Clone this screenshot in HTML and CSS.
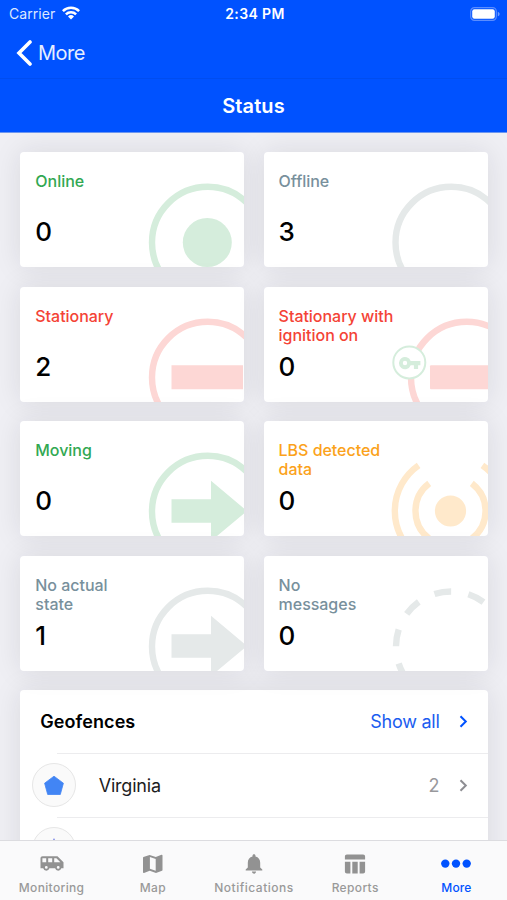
FILE: index.html
```html
<!DOCTYPE html>
<html lang="en">
<head>
<meta charset="utf-8">
<title>Status</title>
<link rel="stylesheet" href="styles.css">
</head>
<body>
<div class="app">
  <header class="header">
    <div class="statusbar">
      <div class="carrier"><span>Carrier</span>
        <svg width="18" height="14" viewBox="0 0 18 14" fill="none" stroke="#fff" stroke-width="2.5"><path d="M.9 5.2a11.4 11.4 0 0 1 16.2 0M3.9 8.3a7.2 7.2 0 0 1 10.2 0"/><path d="M9 13.4 6 10.5a4.3 4.3 0 0 1 6 0z" fill="#fff" stroke="none"/></svg>
      </div>
      <div class="time">2:34 PM</div>
      <svg class="battery" width="31" height="14" viewBox="0 0 31 14"><rect x=".7" y=".7" width="25.6" height="12.6" rx="3.7" fill="none" stroke="#5a8dff" stroke-width="1.2"/><rect x="2.2" y="2.2" width="22.6" height="9.6" rx="2.2" fill="#fff"/><path d="M27.8 4.700c2.400.8 2.400 3.800 0 4.600z" fill="#6f9cff"/></svg>
    </div>
    <div class="back"><svg width="16" height="26" viewBox="0 0 16 26"><path d="M14 2 3 13l11 11" fill="none" stroke="#fff" stroke-width="3.600" stroke-linecap="round" stroke-linejoin="miter"/></svg><span>More</span></div>
    <h1 class="title"><span>Status</span></h1>
  </header>

  <main class="content">
    <section class="grid">
      <article class="card green"><svg class="art" viewBox="0 0 224 115"><circle class="ring" cx="187.7" cy="90.5" r="55.7"/><circle class="solid" cx="187.3" cy="90.5" r="24.5"/></svg><h2>Online</h2><p>0</p></article>
      <article class="card gray"><svg class="art" viewBox="0 0 224 115"><circle class="ring" cx="187.2" cy="90.5" r="55.7"/></svg><h2>Offline</h2><p>3</p></article>
      <article class="card red"><svg class="art" viewBox="0 0 224 115"><circle class="ring" cx="187.7" cy="90.5" r="55.7"/><path class="solid" d="M151.5 78.2H223v24h-71.5z"/></svg><h2>Stationary</h2><p>2</p></article>
      <article class="card red"><svg class="art" viewBox="0 0 224 115"><circle class="ring" cx="202.7" cy="90.5" r="55.7"/><rect class="solid" x="166" y="78.2" width="62" height="24" rx="1"/><circle class="key-ring" cx="145.3" cy="75.4" r="16"/><path class="key" fill-rule="evenodd" d="M146.7 73.9a6.1 6.1 0 1 0 0 4.3h3.2v3.8h4.2v-3.8h2.3v-4.3zM141 73.8a2.2 2.2 0 1 1 0 4.4 2.2 2.2 0 0 1 0-4.4z"/></svg><h2>Stationary with ignition on</h2><p>0</p></article>
      <article class="card green"><svg class="art" viewBox="0 0 224 115"><circle class="ring" cx="187.7" cy="90.5" r="55.7"/><path class="solid" d="M151.5 78.3H191V59.7L227 90l-36 30v-18.2h-39.5z"/></svg><h2>Moving</h2><p>0</p></article>
      <article class="card orange"><svg class="art" viewBox="0 0 224 115"><circle class="solid" cx="186.5" cy="90" r="15.6"/><path class="ring" d="M154.6 44.300a55.800 55.800 0 0 0 0 91.400M218.400 44.300a55.800 55.800 0 0 1 0 91.400M165.200 62.400a34.600 34.600 0 0 0 0 55.200M207.800 62.400a34.600 34.600 0 0 1 0 55.200"/></svg><h2>LBS detected data</h2><p>0</p></article>
      <article class="card gray"><svg class="art" viewBox="0 0 224 115"><circle class="ring" cx="187.7" cy="90.5" r="55.7"/><path class="solid" d="M151.5 78.3H191V59.7L227 90l-36 30v-18.2h-39.5z"/></svg><h2>No actual<br>state</h2><p>1</p></article>
      <article class="card gray"><svg class="art" viewBox="0 0 224 115"><circle class="ring" cx="187" cy="90.5" r="55" stroke-dasharray="17 17.56"/></svg><h2>No<br>messages</h2><p>0</p></article>
    </section>

    <section class="list">
      <div class="list-head"><h3><span>Geofences</span></h3><a><span>Show all</span></a><svg class="chev" width="9" height="13" viewBox="0 0 9 13"><path d="m1.500 1.200 5.300 5.300-5.300 5.300"/></svg></div>
      <div class="row"><i class="badge"><svg width="20" height="19" viewBox="0 0 20 19"><path d="m10 .2 9.400 7-3.100 11.300H3.700L.6 7.200z" fill="#4285f4" stroke="#4285f4" stroke-width=".8" stroke-linejoin="round"/></svg></i><span class="name">Virginia</span><span class="count">2</span><svg class="chev" width="9" height="13" viewBox="0 0 9 13"><path d="m1.500 1.200 5.300 5.300-5.300 5.300"/></svg></div>
      <div class="row"><i class="badge"><svg width="22" height="22" viewBox="0 0 22 22"><path d="m11 0 2.800 7.600H22l-6.500 5 2.300 8L11 16l-6.800 4.600 2.300-8L0 7.600h8.200z" fill="#4d5ce0"/></svg></i></div>
    </section>
  </main>

  <nav class="tabs">
    <a class="tab"><svg width="24" height="20" viewBox="0 0 24 20"><path fill-rule="evenodd" d="M2.500 2.300h15l6 6v6h-2.200a3.200 3.200 0 0 1-6.200 0H9.400a3.200 3.200 0 0 1-6.200 0H.5v-10c0-1.100.9-2 2-2zM2.400 4.300v4h3.800v-4zm5.800 0v4h4v-4zm6 0v4h6.200l-4-4zM6.300 12a1.400 1.400 0 1 0 0 2.800 1.400 1.400 0 0 0 0-2.800zm11.900 0a1.400 1.400 0 1 0 0 2.800 1.400 1.400 0 0 0 0-2.800z"/></svg><span>Monitoring</span></a>
    <a class="tab"><svg width="24" height="20" viewBox="0 0 24 20"><path fill-rule="evenodd" d="M3.200 2.800 8.600.9l6.200 2 5.700-2.100c.5-.2 1 .1 1 .6V16c0 .4-.2.6-.5.7l-6 2.200-6.300-2.100-5.700 2.100c-.5.2-1-.1-1-.6V3.700c0-.4.4-.8 1.200-.9zM8.900 3v11.700l5.800 2V5z"/></svg><span>Map</span></a>
    <a class="tab notifications"><svg width="24" height="20" viewBox="0 0 24 20"><path d="M12 .2c.9 0 1.500.6 1.500 1.500v.7c3 .7 4.700 3.200 4.700 6.300v4.800l2.100 2v1.100H3.700v-1.100l2.100-2V8.700c0-3.100 1.700-5.600 4.700-6.300v-.7C10.500.8 11.100.2 12 .2zM9.900 17.600h4.200a2.100 2.100 0 0 1-4.200 0z"/></svg><span>Notifications</span></a>
    <a class="tab"><svg width="24" height="20" viewBox="0 0 24 20"><path d="M3.900.6h16.200c1.200 0 2 .8 2 2v3H1.900v-3c0-1.200.8-2 2-2zM1.900 7.700h5.500v11.800H3.900c-1.200 0-2-.8-2-2zM9.300 7.700h5.400v11.800H9.300zM16.600 7.700h5.500v9.800c0 1.200-.8 2-2 2h-3.500z"/></svg><span>Reports</span></a>
    <a class="tab active"><svg width="32" height="20" viewBox="0 0 32 20"><circle cx="5.300" cy="9.600" r="4.200"/><circle cx="16" cy="9.600" r="4.200"/><circle cx="26.700" cy="9.600" r="4.200"/></svg><span>More</span></a>
  </nav>
</div>
</body>
</html>
```

FILE: styles.css
```css
* { box-sizing: border-box; }
body { margin: 0; font-family: Inter, "Liberation Sans", sans-serif; color: #000; }
h1, h2, h3, p { margin: 0; font-weight: 400; }
svg { display: block; flex: none; }
.app { width: 507px; height: 900px; display: flex; flex-direction: column; overflow: hidden; background: #efeff4; }

.header { flex: none; height: 133px; background: #0052ff; color: #fff; border-bottom: 1px solid #6c96f0; position: relative; z-index: 1; }
.statusbar { height: 27px; display: grid; grid-template-columns: 1fr auto 1fr; align-items: center; padding: 0 6px 0 9px; }
.carrier { display: flex; align-items: center; gap: 7px; font-size: 14px; letter-spacing: .05px; color: #dce8ff; }
.carrier svg { margin-top: -2px; }
.time { font-size: 14px; font-weight: 600; letter-spacing: .4px; }
.battery { justify-self: end; }
.back { height: 52px; display: flex; align-items: center; gap: 6px; padding-left: 16px; font-size: 20px; letter-spacing: -.5px; color: #e6eeff; border-bottom: 1px solid #004df0; }
.title { height: 53px; line-height: 55px; text-align: center; font-size: 20px; font-weight: 600; letter-spacing: .1px; }

.content { flex: 1; min-height: 0; overflow: hidden; padding: 19.3px 19.5px 0 20.3px; }
.grid { display: grid; grid-template-columns: 224px 224px; grid-auto-rows: 115px; gap: 19.5px 19.3px; }
.card { position: relative; padding: 20px 15px 0; border-radius: 4px; overflow: hidden; background: #fff; }
.card, .list { box-shadow: 0 0 28px rgba(30, 30, 40, .1); }
.art { position: absolute; inset: 0; width: 224px; height: 115px; }
.card h2 { position: relative; height: 40px; max-width: 128px; font-size: 16px; line-height: 19px; font-weight: 450; letter-spacing: -.03px; }
.card p { position: relative; margin-top: 3px; font-size: 26px; line-height: 34px; font-weight: 450; }
.ring { fill: none; stroke: var(--tint); stroke-width: 6.4; }
.solid { fill: var(--tint); }
.key-ring { fill: #fff; stroke: #d5eddc; stroke-width: 2; }
.key { fill: #d5eddc; }
.green { --tint: #d5eddc; }
.green h2 { color: #32a852; }
.gray { --tint: #e5e9e9; }
.gray h2 { color: #78909c; }
.red { --tint: #fdd7d5; }
.red h2 { color: #f44336; }
.orange { --tint: #ffe9cb; }
.orange h2 { color: #fba21b; }

.list { margin-top: 19.5px; width: 467.3px; border-radius: 4px 4px 0 0; background: #fff; }
.list-head, .row { display: flex; align-items: center; height: 63.5px; padding-right: 20px; position: relative; }
.list-head { padding-left: 20px; height: 63px; }
.list-head h3 { flex: 1; font-size: 18px; font-weight: 600; letter-spacing: .08px; }
.list-head a { font-size: 18px; letter-spacing: -.25px; color: #1a5cf0; }
.row::before { content: ""; position: absolute; top: 0; left: 37px; right: 0; height: 1px; background: #ececee; }
.badge { width: 44px; height: 44px; margin-left: 11.4px; border: 1px solid #e6e6e6; border-radius: 50%; background: #fafafa; display: flex; align-items: center; justify-content: center; }
.name { flex: 1; margin-left: 23px; font-size: 18px; letter-spacing: -.2px; color: #1c1c1e; }
.count { font-size: 18px; color: #98989c; }
.chev { margin-left: 19px; fill: none; stroke: #8e8e93; stroke-width: 2; }
.list-head .chev { stroke: #0052ff; }

.tabs { flex: none; height: 60px; display: grid; grid-template-columns: repeat(5, 1fr); padding-left: 1px; background: #fafafb; border-top: 1px solid #dcdce0; position: relative; z-index: 1; }
.tab { display: flex; flex-direction: column; align-items: center; padding-top: 13px; font-size: 12px; font-weight: 450; line-height: 17px; color: #999; letter-spacing: .35px; }
.tab svg { fill: #929292; margin-bottom: 5px; }
.notifications { letter-spacing: .5px; }
.active { color: #0052ff; font-weight: 500; letter-spacing: .1px; }
.active svg { fill: #0052ff; }
```
